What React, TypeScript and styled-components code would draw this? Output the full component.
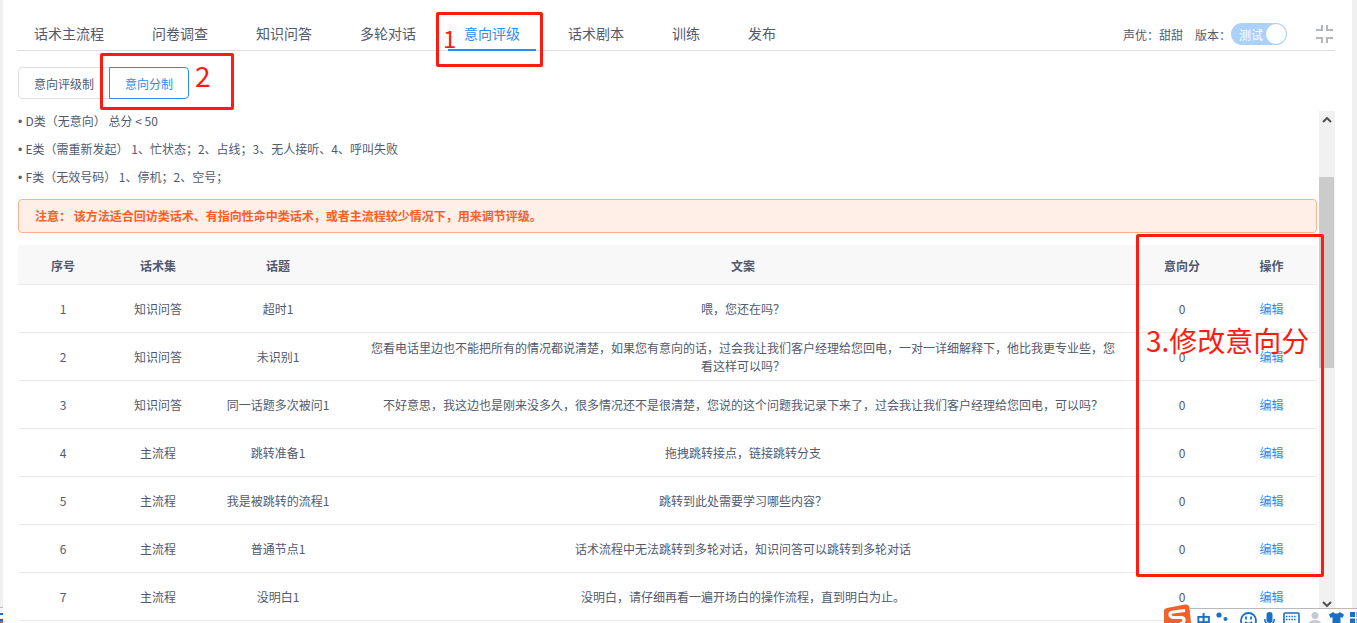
import React from 'react';
import styled, { createGlobalStyle } from 'styled-components';

const GlobalStyle = createGlobalStyle`
  html, body {
    margin: 0;
    padding: 0;
    background: #fff;
    overflow: hidden;
  }
  body {
    font-family: "Noto Sans CJK SC", "Liberation Sans", sans-serif;
    font-size: 12px;
    color: #515a6e;
  }
`;

const Page = styled.div`
  position: relative;
  display: flex;
  width: 1357px;
  height: 623px;
  overflow: hidden;
`;

const EdgeLeft = styled.div`
  flex: none;
  width: 3px;
  height: 607px;
  background: #f0f0f0;
`;

const EdgeRight = styled.div`
  flex: none;
  width: 5px;
  background: #f0f0f0;
`;

const Main = styled.main`
  flex: 1;
  min-width: 0;
  padding: 18px 17px 0 14px;
  display: flex;
  flex-direction: column;
`;

const TabBar = styled.div`
  display: flex;
  align-items: stretch;
  height: 33px;
  padding-left: 1px;
  border-bottom: 1px solid #dcdee2;
  box-sizing: border-box;
`;

const Tab = styled.div<{ $active?: boolean }>`
  padding: 0 16px;
  margin-right: 16px;
  line-height: 31px;
  font-size: 14px;
  color: ${p => (p.$active ? '#2d8cf0' : '#515a6e')};
  box-shadow: ${p => (p.$active ? 'inset 0 -2px 0 #2d8cf0' : 'none')};
  height: 33px;
  box-sizing: border-box;
`;

const BarRight = styled.div`
  margin-left: auto;
  display: flex;
  align-items: center;
  height: 32px;
  padding-right: 1px;
`;

const Voice = styled.span`
  margin-right: 12px;
`;

const Toggle = styled.div`
  display: flex;
  align-items: center;
  justify-content: space-between;
  width: 56px;
  height: 22px;
  padding: 0 1px 0 8px;
  box-sizing: border-box;
  border-radius: 11px;
  background: #abd1f9;
  color: #fff;
  margin-right: 29px;
`;

const Knob = styled.span`
  width: 20px;
  height: 20px;
  border-radius: 50%;
  background: #fff;
`;

const SubTabs = styled.div`
  display: flex;
  margin: 16px 0 12px 1px;
`;

const SubTab = styled.div<{ $active?: boolean }>`
  position: relative;
  height: 30px;
  line-height: 32px;
  padding: 0 15px;
  border: 1px solid ${p => (p.$active ? '#2d8cf0' : '#dcdee2')};
  color: ${p => (p.$active ? '#2d8cf0' : '#515a6e')};
  border-radius: ${p => (p.$active ? '0 4px 4px 0' : '4px 0 0 4px')};
  margin-left: ${p => (p.$active ? '-1px' : '0')};
  background: #fff;
`;

const ScrollArea = styled.div`
  flex: 1;
  min-height: 0;
  display: flex;
  gap: 1px;
`;

const Content = styled.div`
  flex: 1;
  min-width: 0;
  overflow: hidden;
`;

const Note = styled.div`
  height: 20px;
  line-height: 20px;
  margin: 0 0 8px 1px;
  white-space: pre;
`;

const Bullet = styled.span`
  font-family: "Liberation Sans", sans-serif;
`;

const Alert = styled.div`
  margin: 12px 1px 12px 1px;
  height: 34px;
  line-height: 32px;
  box-sizing: border-box;
  padding-left: 16px;
  border: 1px solid #ffb08f;
  border-radius: 4px;
  background: #ffefe6;
  color: #f5602a;
  font-weight: 700;
`;

const Table = styled.table`
  width: 1299px;
  margin-left: 1px;
  table-layout: fixed;
  border-collapse: separate;
  border-spacing: 0;
`;

const HeadCell = styled.th`
  height: 40px;
  padding: 2px 0 0;
  background: #f8f8f9;
  border-bottom: 1px solid #e8eaec;
  font-weight: 700;
  font-size: 12px;
  box-sizing: border-box;
`;

const Cell = styled.td<{ $copy?: boolean }>`
  height: 48px;
  padding: ${p => (p.$copy ? '0 20px' : '0')};
  line-height: 18px;
  text-align: center;
  border-bottom: 1px solid #e8eaec;
  box-sizing: border-box;
`;

const EditLink = styled.a`
  color: #2d8cf0;
`;

const ScrollBar = styled.div`
  flex: none;
  width: 16px;
  height: 501px;
  background: #f1f1f1;
  display: flex;
  flex-direction: column;
  align-items: center;
`;

const ArrowBox = styled.div<{ $bottom?: boolean }>`
  height: 17px;
  width: 16px;
  display: flex;
  align-items: center;
  justify-content: center;
  margin-top: ${p => (p.$bottom ? 'auto' : '0')};
`;

const Thumb = styled.div`
  width: 15px;
  height: 191px;
  margin-top: 49px;
  align-self: flex-start;
  background: #cbcbcb;
`;

const Mark = styled.div<{ $x: number; $y: number; $w: number; $h: number }>`
  position: absolute;
  left: ${p => p.$x}px;
  top: ${p => p.$y}px;
  width: ${p => p.$w}px;
  height: ${p => p.$h}px;
  box-sizing: border-box;
  border: 3px solid #fb1c12;
  border-radius: 2px;
  pointer-events: none;
`;

const MarkLabel = styled.span<{ $x: number; $y: number; $size: number }>`
  position: absolute;
  left: ${p => p.$x}px;
  top: ${p => p.$y}px;
  font-size: ${p => p.$size}px;
  line-height: 1;
  color: #fb1c12;
  white-space: nowrap;
`;

const ImeBar = styled.div`
  position: absolute;
  right: 0;
  bottom: 0;
  width: 167px;
  height: 15px;
  display: flex;
  align-items: flex-start;
  padding: 3px 0 0 6px;
  box-sizing: border-box;
  background: #fff;
  border-top: 1px solid #b9b9b9;
  overflow: hidden;
`;

const ImeSlot = styled.span<{ $gap: number }>`
  flex: none;
  display: flex;
  margin-left: ${p => p.$gap}px;
`;

const ImeLogo = styled.svg`
  position: absolute;
  left: 1163px;
  top: 604px;
`;

const ImeText = styled.span`
  font-size: 15px;
  font-weight: 700;
  color: #1a6fc4;
  line-height: 15px;
`;

const TaskbarScrap = styled.div`
  position: absolute;
  left: 0;
  top: 607px;
  width: 3px;
  height: 16px;
  box-sizing: border-box;
  border-top: 1px solid #b9b9b9;
  background: linear-gradient(#fff 5px, #1a6fc4 5px, #1a6fc4 7px, #fff 7px, #fff 11px, #1a6fc4 11px, #1a6fc4 13px, #e0503a 13px);
`;

const tabs = ['话术主流程', '问卷调查', '知识问答', '多轮对话', '意向评级', '话术剧本', '训练', '发布'];

const rows = [
  ['1', '知识问答', '超时1', '喂，您还在吗？'],
  ['2', '知识问答', '未识别1', '您看电话里边也不能把所有的情况都说清楚，如果您有意向的话，过会我让我们客户经理给您回电，一对一详细解释下，他比我更专业些，您看这样可以吗？'],
  ['3', '知识问答', '同一话题多次被问1', '不好意思，我这边也是刚来没多久，很多情况还不是很清楚，您说的这个问题我记录下来了，过会我让我们客户经理给您回电，可以吗？'],
  ['4', '主流程', '跳转准备1', '拖拽跳转接点，链接跳转分支'],
  ['5', '主流程', '我是被跳转的流程1', '跳转到此处需要学习哪些内容？'],
  ['6', '主流程', '普通节点1', '话术流程中无法跳转到多轮对话，知识问答可以跳转到多轮对话'],
  ['7', '主流程', '没明白1', '没明白，请仔细再看一遍开场白的操作流程，直到明白为止。'],
];

function CornersIcon() {
  return (
    <svg width="18" height="18" viewBox="0 0 18 18" fill="none" stroke="#b4b7bd" strokeWidth="2">
      <path d="M0 5H6V0M11 0V5H17M0 13H6V18M17 13H11V18" />
    </svg>
  );
}

function Chevron({ down }: { down?: boolean }) {
  return (
    <svg width="10" height="6" viewBox="0 0 10 6" fill="none" stroke="#505050" strokeWidth="2">
      <path d={down ? 'M1 1L5 5L9 1' : 'M1 5L5 1L9 5'} />
    </svg>
  );
}

function ImeIcons() {
  return (
    <>
      <ImeSlot $gap={0}>
        <ImeText>中</ImeText>
      </ImeSlot>
      <ImeSlot $gap={5}>
        <svg width="12" height="12" viewBox="0 0 12 12" fill="#1a6fc4">
          <circle cx="3" cy="3" r="2.600" />
          <circle cx="9.500" cy="7" r="2" />
        </svg>
      </ImeSlot>
      <ImeSlot $gap={12}>
        <svg width="17" height="17" viewBox="0 0 17 17" fill="none" stroke="#1a6fc4" strokeWidth="1.800">
          <circle cx="8.500" cy="8.500" r="7.500" />
          <path d="M6 4.500v3M11 4.500v3M5 10c2 2 5 2 7 0" />
        </svg>
      </ImeSlot>
      <ImeSlot $gap={7}>
        <svg width="11" height="16" viewBox="0 0 11 16" fill="#1a6fc4">
          <rect x="2.500" y="0" width="6" height="11" rx="3" />
          <path d="M0 7c0 4 2.500 6 5.500 6s5.500-2 5.500-6h-1.500c0 3-1.500 4.500-4 4.500S1.500 10 1.500 7z" />
        </svg>
      </ImeSlot>
      <ImeSlot $gap={8}>
        <svg width="17" height="14" viewBox="0 0 17 14" fill="none" stroke="#1a6fc4" strokeWidth="1.600">
          <rect x="1" y="1" width="15" height="13" rx="1" />
          <path d="M3 4.500h11M3 7.500h11" strokeDasharray="1.500 1.200" />
        </svg>
      </ImeSlot>
      <ImeSlot $gap={7}>
        <svg width="18" height="14" viewBox="0 0 18 14" fill="#c2cad6">
          <circle cx="8" cy="3.500" r="3.500" />
          <path d="M1 14c0-4 3-6 7-6s7 2 7 6z" />
        </svg>
      </ImeSlot>
      <ImeSlot $gap={4}>
        <svg width="15" height="13" viewBox="0 0 15 13" fill="#1a6fc4">
          <path d="M4.500 0L0 2.500L1.500 6L3.500 5V13H11.500V5L13.500 6L15 2.500L10.500 0C9.800 2 5.200 2 4.500 0z" />
        </svg>
      </ImeSlot>
      <ImeSlot $gap={6}>
        <svg width="12" height="12" viewBox="0 0 12 12" fill="#1a6fc4">
          <rect width="5" height="5" />
          <rect x="6.500" width="5" height="5" />
          <rect y="6.500" width="5" height="5" />
          <rect x="6.500" y="6.500" width="5" height="5" />
        </svg>
      </ImeSlot>
    </>
  );
}

export default function App() {
  return (
    <Page>
      <GlobalStyle />
      <EdgeLeft />
      <Main>
        <TabBar>
          {tabs.map(t => (
            <Tab key={t} $active={t === '意向评级'}>{t}</Tab>
          ))}
          <BarRight>
            <Voice>声优：甜甜</Voice>
            <span>版本：</span>
            <Toggle>
              测试
              <Knob />
            </Toggle>
            <CornersIcon />
          </BarRight>
        </TabBar>
        <SubTabs>
          <SubTab>意向评级制</SubTab>
          <SubTab $active>意向分制</SubTab>
        </SubTabs>
        <ScrollArea>
          <Content>
            <Note><Bullet>• </Bullet>D类（无意向） 总分 &lt; 50</Note>
            <Note><Bullet>• </Bullet>E类（需重新发起） 1、忙状态；2、占线；3、无人接听、4、呼叫失败</Note>
            <Note><Bullet>• </Bullet>F类（无效号码） 1、停机；2、空号；</Note>
            <Alert>注意： 该方法适合回访类话术、有指向性命中类话术，或者主流程较少情况下，用来调节评级。</Alert>
            <Table>
              <colgroup>
                <col width="90" />
                <col width="100" />
                <col width="140" />
                <col width="790" />
                <col width="88" />
                <col width="91" />
              </colgroup>
              <thead>
                <tr>
                  <HeadCell>序号</HeadCell>
                  <HeadCell>话术集</HeadCell>
                  <HeadCell>话题</HeadCell>
                  <HeadCell>文案</HeadCell>
                  <HeadCell>意向分</HeadCell>
                  <HeadCell>操作</HeadCell>
                </tr>
              </thead>
              <tbody>
                {rows.map(r => (
                  <tr key={r[0]}>
                    <Cell>{r[0]}</Cell>
                    <Cell>{r[1]}</Cell>
                    <Cell>{r[2]}</Cell>
                    <Cell $copy>{r[3]}</Cell>
                    <Cell>0</Cell>
                    <Cell><EditLink>编辑</EditLink></Cell>
                  </tr>
                ))}
              </tbody>
            </Table>
          </Content>
          <ScrollBar>
            <ArrowBox><Chevron /></ArrowBox>
            <Thumb />
            <ArrowBox $bottom><Chevron down /></ArrowBox>
          </ScrollBar>
        </ScrollArea>
      </Main>
      <EdgeRight />

      <Mark $x={436} $y={12} $w={107} $h={55} />
      <MarkLabel $x={443} $y={26} $size={24}>1</MarkLabel>
      <Mark $x={100} $y={53} $w={134} $h={57} />
      <MarkLabel $x={195} $y={61} $size={28}>2</MarkLabel>
      <Mark $x={1136} $y={234} $w={188} $h={343} />
      <MarkLabel $x={1146} $y={326} $size={28}>3.修改意向分</MarkLabel>

      <ImeBar>
        <ImeIcons />
      </ImeBar>
      <ImeLogo width="28" height="19" viewBox="0 0 28 19">
        <path d="M4 4L22 0.500Q26 0 26.500 4L28 19H1L1 7Q1 4.500 4 4z" fill="#f4602a" />
        <path d="M22 6.500L10 8Q6.500 8.500 7 11T10.500 13.500H18Q21.500 13.500 21 16.500T17 20" fill="none" stroke="#fff" strokeWidth="3.200" />
      </ImeLogo>
      <TaskbarScrap />
    </Page>
  );
}
